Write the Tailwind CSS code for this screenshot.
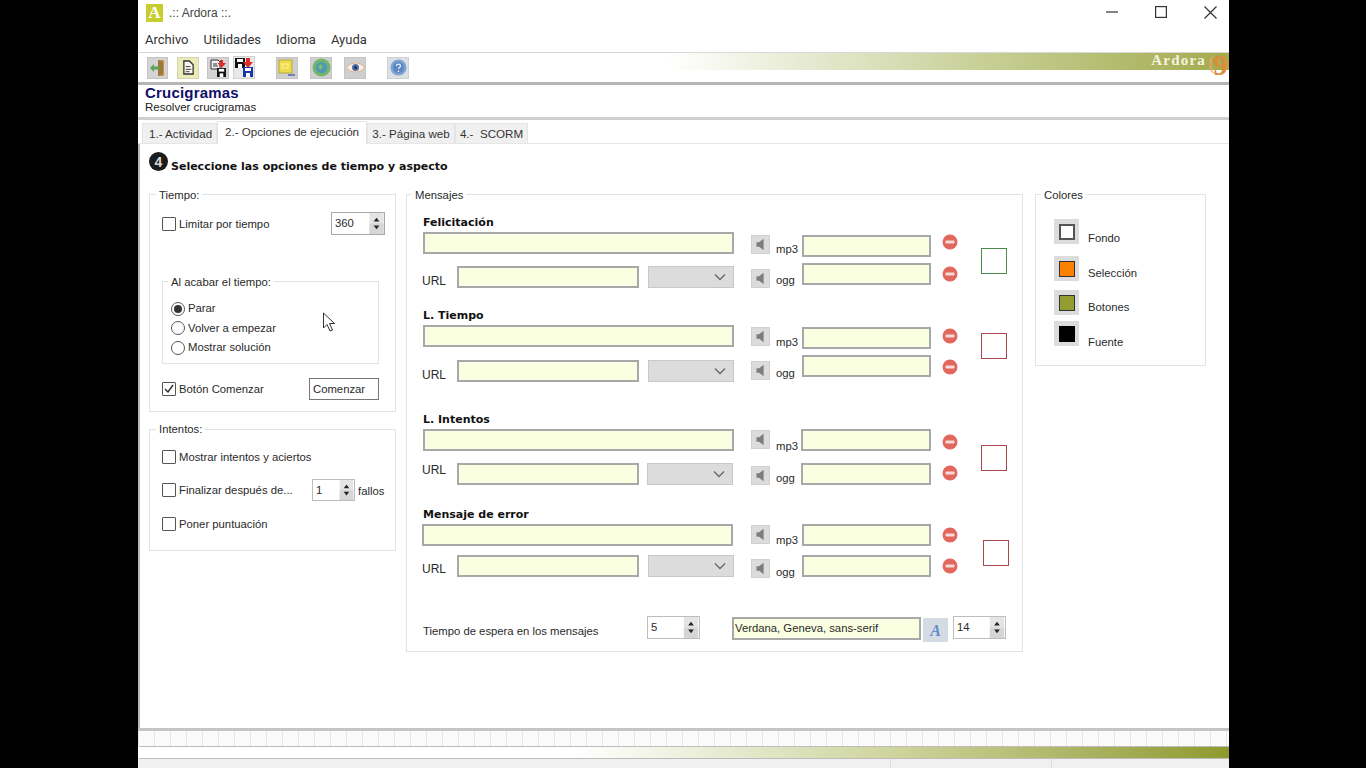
<!DOCTYPE html>
<html lang="es">
<head>
<meta charset="UTF-8">
<title>.:: Ardora ::.</title>
<script src="https://cdn.jsdelivr.net/npm/@tailwindcss/browser@4"></script>
</head>
<body class="bg-black h-[768px] overflow-hidden font-['Liberation_Sans',sans-serif] text-[#2a2a2a]">
<svg class="hidden">
  <symbol id="spk" viewBox="0 0 19 19"><path d="M5 7h3l5-4v13l-5-4H5z" fill="#7d7d7d"/></symbol>
  <symbol id="minus" viewBox="0 0 16 16"><circle cx="8" cy="8" r="7.5" fill="#e2685f"/><rect x="3.5" y="6.5" width="9" height="3" rx="1" fill="#f6dcd8"/></symbol>
  <symbol id="chev" viewBox="0 0 12 8"><path d="M1 1.5l5 5 5-5" fill="none" stroke="#666" stroke-width="1.3"/></symbol>
  <symbol id="spin" viewBox="0 0 15 22"><rect width="15" height="22" fill="#e4e4e4"/><rect y="11" width="15" height="11" fill="#d6d6d6"/><path d="M7.5 5l3 4h-6zM7.5 17l-3-4h6z" fill="#222"/></symbol>
  <symbol id="disk" viewBox="0 0 10 10"><path d="M0 0h10v10H0z" fill="currentColor"/><rect x="2" y="1" width="6" height="3" fill="#fff"/><rect x="3" y="6" width="4" height="4" fill="#fff"/></symbol>
</svg>

<div class="ml-[138px] w-[1091px] h-[768px] bg-white flex flex-col relative overflow-hidden">
  <!-- title bar -->
  <div class="h-[28px] flex items-center shrink-0">
    <div class="ml-[8px] mt-[-3px] w-[17px] h-[18px] bg-[#c6cd2c] flex items-center justify-center text-white font-['Liberation_Serif',serif] font-bold text-[17px] leading-none">A</div>
    <span class="ml-[6px] mt-[-3px] text-[12px] text-[#444]">.:: Ardora ::.</span>
    <div class="ml-auto flex items-center mt-[-4px]">
      <svg class="w-[12px] h-[12px]" viewBox="0 0 12 12"><path d="M0 6h12" stroke="#333" stroke-width="1.2"/></svg>
      <svg class="ml-[37px] w-[12px] h-[12px]" viewBox="0 0 12 12"><rect x=".6" y=".6" width="10.8" height="10.8" fill="none" stroke="#333" stroke-width="1.2"/></svg>
      <svg class="ml-[37px] mr-[12px] w-[13px] h-[13px]" viewBox="0 0 13 13"><path d="M.5.5l12 12M12.5.5l-12 12" stroke="#333" stroke-width="1.2"/></svg>
    </div>
  </div>
  <!-- menu -->
  <div class="h-[24px] flex items-center pl-[7px] gap-[15px] font-['Roboto',sans-serif] text-[13px] text-[#333] shrink-0">
    <span>Archivo</span><span>Utilidades</span><span>Idioma</span><span>Ayuda</span>
  </div>
  <!-- toolbar -->
  <div class="h-[30px] border-t border-[#d8d8d8] relative shrink-0 flex items-center pl-[9px]">
    <div class="absolute left-[530px] right-0 top-0 h-[17px] bg-gradient-to-r from-white via-[#c4cc8f] via-60% to-[#a3ab4c]"></div>
    <span class="absolute right-[23px] top-[-4px] font-['Liberation_Serif',serif] font-bold text-[15px] tracking-[1.2px] text-[#f4f3df]">Ardora</span>
    <span class="absolute right-[14px] top-[-1px] font-['Liberation_Serif',serif] text-[20px] leading-[20px] text-[#e6a468]">(</span>
    <span class="absolute right-[1px] top-[-3px] font-['Liberation_Serif',serif] font-bold text-[30px] leading-[30px] text-[#e08a3c]">9</span>
    <div class="relative flex items-center">
      <div class="w-[21px] h-[22px] bg-[#d4d4d4] border border-[#c4c4c4] flex items-center justify-center">
        <svg class="w-[17px] h-[18px]" viewBox="0 0 17 18"><path d="M9 1h6v16H9z" fill="#c98f45"/><path d="M9 1l5 2v12l-5 2z" fill="#9a7a3c"/><path d="M1 9l4-4v2.500h5v3H5V13z" fill="#5ea35c"/></svg>
      </div>
      <div class="ml-[9px] w-[22px] h-[22px] bg-[#e9ecb4] border border-[#d3d3b5] flex items-center justify-center">
        <svg class="w-[13px] h-[15px]" viewBox="0 0 14 16"><path d="M2 1h6l4 4v10H2z" fill="#f7f7f0" stroke="#333" stroke-width="1.400"/><path d="M4 7h5M4 10h6M4 12.500h4" stroke="#333"/></svg>
      </div>
      <div class="ml-[8px] w-[22px] h-[22px] bg-[#d4d4d4] border border-[#c4c4c4] relative">
        <svg class="absolute left-[2px] top-[1px] w-[17px] h-[19px]" viewBox="0 0 17 19"><path d="M1 1h7l2 2v7H1z" fill="#f2f2f2" stroke="#333"/><path d="M3 5h4M3 7h5" stroke="#333"/><path d="M10 1h3v3h3l-4.500 5L7.500 4H10z" fill="#e02a24"/></svg>
        <svg class="absolute right-[2px] bottom-[1px] w-[9px] h-[9px] text-[#111]"><use href="#disk"/></svg>
      </div>
      <div class="ml-[4px] w-[22px] h-[23px] bg-[#e8e8e8] border border-[#d0d0d0] relative">
        <svg class="absolute left-[1px] top-[1px] w-[10px] h-[10px] text-[#111]"><use href="#disk"/></svg>
        <svg class="absolute right-[1px] top-[1px] w-[10px] h-[11px]" viewBox="0 0 10 11"><path d="M3 0h4v4h3l-5 6-5-6h3z" fill="#e02a24"/></svg>
        <svg class="absolute right-[1px] bottom-[1px] w-[10px] h-[10px] text-[#1a35a8]"><use href="#disk"/></svg>
      </div>
      <div class="ml-[21px] w-[22px] h-[22px] bg-[#cfcfcf] border border-[#c4c4c4] relative">
        <svg class="absolute inset-0 m-auto w-[18px] h-[18px]" viewBox="0 0 18 18"><rect x="1" y="1" width="13" height="13" fill="#eedc4a" stroke="#b7a93a"/><rect x="4" y="5" width="6" height="4" fill="none" stroke="#fff5a5"/><path d="M10 16h7" stroke="#6d7fb5" stroke-width="2"/></svg>
      </div>
      <div class="ml-[12px] w-[22px] h-[22px] bg-[#cfcfcf] border border-[#c4c4c4] flex items-center justify-center">
        <svg class="w-[19px] h-[19px]" viewBox="0 0 19 19"><circle cx="9.500" cy="9.500" r="9" fill="#6fb56a"/><circle cx="9.500" cy="9.500" r="5.500" fill="#4f97b8"/><path d="M6 8l3-2 2 3-3 3z" fill="#7fc06a"/></svg>
      </div>
      <div class="ml-[12px] w-[22px] h-[22px] bg-[#cfcfcf] border border-[#c4c4c4] flex items-center justify-center">
        <svg class="w-[19px] h-[13px]" viewBox="0 0 19 13"><path d="M.5 6.500C5 .5 14 .5 18.500 6.500 14 12.500 5 12.500.5 6.500z" fill="#fbeee0" stroke="#e2b48a"/><circle cx="9.500" cy="6.500" r="3.500" fill="#4d6fb0"/><circle cx="9.500" cy="6.500" r="1.500" fill="#1e2d55"/></svg>
      </div>
      <div class="ml-[21px] w-[22px] h-[22px] bg-[#dcdfe4] border border-[#cdd0d5] flex items-center justify-center">
        <svg class="w-[17px] h-[17px]" viewBox="0 0 17 17"><circle cx="8.500" cy="8.500" r="8" fill="#7ea3d2"/><circle cx="8.500" cy="8.500" r="5.500" fill="#5b87c2"/><path d="M6.500 7c0-2.500 4-2.500 4 0 0 1.500-2 1.500-2 3M8.500 11.500v1.500" fill="none" stroke="#e6eefa" stroke-width="1.300"/></svg>
      </div>
    </div>
  </div>
  <!-- activity header -->
  <div class="shrink-0 border-t-[3px] border-b-[3px] border-t-[#b5b5b5] border-b-[#cfcfcf] pl-[7px] box-content h-[32px]">
    <div class="font-bold text-[15px] leading-[15px] text-[#10106a] tracking-[0.2px]">Crucigramas</div>
    <div class="text-[11.5px] leading-[14px] text-[#222]">Resolver crucigramas</div>
  </div>
  <!-- tabs -->
  <div class="h-[24px] shrink-0 border-b border-[#e6e6e6] flex items-end pl-[4px] text-[11.6px] text-[#333] relative">
    <div class="w-[75px] h-[20px] bg-[#f0f0f0] border border-b-0 border-[#e4e4e4] flex items-center pl-[6px]">1.- Actividad</div>
    <div class="w-[150px] h-[23px] bg-white border-t border-x border-[#e4e4e4] mb-[-1px] flex items-center justify-center pb-[2px]">2.- Opciones de ejecución</div>
    <div class="w-[88px] h-[20px] bg-[#f0f0f0] border border-b-0 border-[#e4e4e4] flex items-center justify-center">3.- Página web</div>
    <div class="w-[73px] h-[20px] bg-[#f0f0f0] border border-b-0 border-[#e4e4e4] flex items-center justify-center">4.-&nbsp; SCORM</div>
  </div>

  <!-- panel -->
  <div class="flex-1 border-l-2 border-[#b9b9b9] pl-[9px] pt-[8px] relative">
    <div class="flex items-center h-[19px]">
      <div class="w-[19px] h-[19px] rounded-full bg-[#1c1c1c] text-[#d8d8d8] text-[14px] font-bold flex items-center justify-center leading-none">4</div>
      <span class="ml-[3px] mt-[12px] font-['DejaVu_Sans',sans-serif] font-bold text-[11px] text-[#111]">Seleccione las opciones de tiempo y aspecto</span>
    </div>
    <div class="flex items-start mt-[23px] text-[11.3px] leading-[15px]">
      <!-- left column -->
      <div class="w-[247px]">
        <div class="h-[218px] border border-[#e3e3e3] relative">
          <span class="absolute left-[6px] top-[-7px] bg-white px-[3px]">Tiempo:</span>
          <div class="mt-[17px] h-[23px] flex items-center pl-[12px]">
            <span class="w-[14px] h-[14px] border border-[#555] bg-white rounded-[1px]"></span>
            <span class="ml-[3px] mt-[2px]">Limitar por tiempo</span>
            <div class="ml-auto mr-[10px] w-[54px] h-[23px] border border-[#a8a8a8] bg-white flex items-center pl-[3px]">
              <span class="flex-1">360</span><svg class="w-[15px] h-[21px]"><use href="#spin"/></svg>
            </div>
          </div>
          <div class="ml-[12px] mt-[46px] w-[217px] h-[83px] border border-[#e3e3e3] relative pt-[17px]">
            <span class="absolute left-[5px] top-[-7px] bg-white px-[3px]">Al acabar el tiempo:</span>
            <div class="h-[19.5px] flex items-center pl-[8px]">
              <span class="w-[14px] h-[14px] rounded-full border border-[#555] flex items-center justify-center"><span class="w-[8px] h-[8px] rounded-full bg-[#333]"></span></span>
              <span class="ml-[3px]">Parar</span>
            </div>
            <div class="h-[19.5px] flex items-center pl-[8px]">
              <span class="w-[14px] h-[14px] rounded-full border border-[#555]"></span>
              <span class="ml-[3px]">Volver a empezar</span>
            </div>
            <div class="h-[19.5px] flex items-center pl-[8px]">
              <span class="w-[14px] h-[14px] rounded-full border border-[#555]"></span>
              <span class="ml-[3px]">Mostrar solución</span>
            </div>
          </div>
          <div class="mt-[14px] h-[22px] flex items-center pl-[12px]">
            <span class="w-[14px] h-[14px] border border-[#555] flex items-center justify-center rounded-[1px]">
              <svg class="w-[12px] h-[12px]" viewBox="0 0 12 12"><path d="M2 6l3 3 5-7" fill="none" stroke="#222" stroke-width="1.300"/></svg>
            </span>
            <span class="ml-[3px]">Botón Comenzar</span>
            <div class="ml-auto mr-[16px] w-[70px] h-[22px] border border-[#777] flex items-center pl-[3px]">Comenzar</div>
          </div>
        </div>
        <div class="mt-[17px] h-[122px] border border-[#e3e3e3] relative pl-[12px]">
          <span class="absolute left-[6px] top-[-8px] bg-white px-[3px]">Intentos:</span>
          <div class="mt-[16px] h-[22px] flex items-center">
            <span class="w-[14px] h-[14px] border border-[#555] rounded-[1px]"></span>
            <span class="ml-[3px]">Mostrar intentos y aciertos</span>
          </div>
          <div class="mt-[11px] h-[22px] flex items-center">
            <span class="w-[14px] h-[14px] border border-[#555] rounded-[1px]"></span>
            <span class="ml-[3px] w-[133px]">Finalizar después de...</span>
            <div class="w-[43px] h-[22px] border border-[#bdbdbd] flex items-center pl-[3px]">
              <span class="flex-1">1</span><svg class="w-[15px] h-[20px]"><use href="#spin"/></svg>
            </div>
            <span class="ml-[3px] mt-[3px]">fallos</span>
          </div>
          <div class="mt-[12px] h-[22px] flex items-center">
            <span class="w-[14px] h-[14px] border border-[#555] rounded-[1px]"></span>
            <span class="ml-[3px]">Poner puntuación</span>
          </div>
        </div>
      </div>

      <!-- mensajes -->
      <div class="ml-[10px] w-[617px] h-[458px] border border-[#e3e3e3] relative pl-[15px] pt-[20px]">
        <span class="absolute left-[5px] top-[-7px] bg-white px-[3px]">Mensajes</span>

        <!-- Felicitación -->
        <div class="flex items-start">
          <div class="w-[329px]">
            <div class="h-[17px] ml-px font-['DejaVu_Sans',sans-serif] font-bold text-[11px] text-[#111]">Felicitación</div>
            <div class="ml-px w-[311px] h-[22px] bg-[#fbffe2] border-2 border-[#a8a8a8]"></div>
            <div class="mt-[12px] h-[22px] flex items-start">
              <span class="w-[35px] mt-[8px] text-[12px]">URL</span>
              <div class="w-[182px] h-[22px] bg-[#fbffe2] border-2 border-[#a8a8a8]"></div>
              <div class="ml-[9px] w-[86px] h-[22px] bg-[#dcdcdc] border border-[#c8c8c8] flex items-center justify-end pr-[7px]"><svg class="w-[12px] h-[8px]"><use href="#chev"/></svg></div>
            </div>
          </div>
          <div class="w-[208px] pt-[20px]">
            <div class="h-[22px] flex items-start">
              <div class="w-[19px] h-[19px] bg-[#dcdcdc] border border-[#d0d0d0]"><svg class="w-[17px] h-[17px]"><use href="#spk"/></svg></div>
              <span class="ml-[6px] w-[26px] mt-[7px]">mp3</span>
              <div class="w-[129px] h-[22px] bg-[#fbffe2] border-2 border-[#a8a8a8]"></div>
              <svg class="ml-[11px] mt-[-1px] w-[16px] h-[16px]"><use href="#minus"/></svg>
            </div>
            <div class="mt-[6px] h-[22px] flex items-start">
              <div class="mt-[6px] w-[19px] h-[19px] bg-[#dcdcdc] border border-[#d0d0d0]"><svg class="w-[17px] h-[17px]"><use href="#spk"/></svg></div>
              <span class="ml-[6px] w-[26px] mt-[10px]">ogg</span>
              <div class="w-[129px] h-[22px] bg-[#fbffe2] border-2 border-[#a8a8a8]"></div>
              <svg class="ml-[11px] mt-[3px] w-[16px] h-[16px]"><use href="#minus"/></svg>
            </div>
          </div>
          <div class="ml-[22px] mt-[33px] w-[26px] h-[26px] border-[1.5px] border-[#4b8a4b]"></div>
        </div>

        <!-- L. Tiempo -->
        <div class="flex items-start mt-[20px]">
          <div class="w-[329px]">
            <div class="h-[17px] ml-px font-['DejaVu_Sans',sans-serif] font-bold text-[11px] text-[#111]">L. Tiempo</div>
            <div class="ml-px w-[311px] h-[22px] bg-[#fbffe2] border-2 border-[#a8a8a8]"></div>
            <div class="mt-[13px] h-[22px] flex items-start">
              <span class="w-[35px] mt-[8px] text-[12px]">URL</span>
              <div class="w-[182px] h-[22px] bg-[#fbffe2] border-2 border-[#a8a8a8]"></div>
              <div class="ml-[9px] w-[86px] h-[22px] bg-[#dcdcdc] border border-[#c8c8c8] flex items-center justify-end pr-[7px]"><svg class="w-[12px] h-[8px]"><use href="#chev"/></svg></div>
            </div>
          </div>
          <div class="w-[208px] pt-[19px]">
            <div class="h-[22px] flex items-start">
              <div class="w-[19px] h-[19px] bg-[#dcdcdc] border border-[#d0d0d0]"><svg class="w-[17px] h-[17px]"><use href="#spk"/></svg></div>
              <span class="ml-[6px] w-[26px] mt-[8px]">mp3</span>
              <div class="w-[129px] h-[22px] bg-[#fbffe2] border-2 border-[#a8a8a8]"></div>
              <svg class="ml-[11px] mt-[1px] w-[16px] h-[16px]"><use href="#minus"/></svg>
            </div>
            <div class="mt-[6px] h-[22px] flex items-start">
              <div class="mt-[6px] w-[19px] h-[19px] bg-[#dcdcdc] border border-[#d0d0d0]"><svg class="w-[17px] h-[17px]"><use href="#spk"/></svg></div>
              <span class="ml-[6px] w-[26px] mt-[11px]">ogg</span>
              <div class="w-[129px] h-[22px] bg-[#fbffe2] border-2 border-[#a8a8a8]"></div>
              <svg class="ml-[11px] mt-[4px] w-[16px] h-[16px]"><use href="#minus"/></svg>
            </div>
          </div>
          <div class="ml-[22px] mt-[25px] w-[26px] h-[26px] border-[1.5px] border-[#a9484c]"></div>
        </div>

        <!-- L. Intentos -->
        <div class="flex items-start mt-[30px]">
          <div class="w-[329px]">
            <div class="h-[17px] ml-px font-['DejaVu_Sans',sans-serif] font-bold text-[11px] text-[#111]">L. Intentos</div>
            <div class="ml-px w-[311px] h-[22px] bg-[#fbffe2] border-2 border-[#a8a8a8]"></div>
            <div class="mt-[12px] h-[22px] flex items-start">
              <span class="w-[35px] text-[12px]">URL</span>
              <div class="w-[182px] h-[22px] bg-[#fbffe2] border-2 border-[#a8a8a8]"></div>
              <div class="ml-[8px] w-[86px] h-[22px] bg-[#dcdcdc] border border-[#c8c8c8] flex items-center justify-end pr-[7px]"><svg class="w-[12px] h-[8px]"><use href="#chev"/></svg></div>
            </div>
          </div>
          <div class="w-[208px] pt-[17px]">
            <div class="h-[22px] flex items-start">
              <div class="mt-px w-[19px] h-[19px] bg-[#dcdcdc] border border-[#d0d0d0]"><svg class="w-[17px] h-[17px]"><use href="#spk"/></svg></div>
              <span class="ml-[6px] w-[25px] mt-[10px]">mp3</span>
              <div class="w-[130px] h-[22px] bg-[#fbffe2] border-2 border-[#a8a8a8]"></div>
              <svg class="ml-[11px] mt-[5px] w-[16px] h-[16px]"><use href="#minus"/></svg>
            </div>
            <div class="mt-[12px] h-[22px] flex items-start">
              <div class="mt-[3px] w-[19px] h-[19px] bg-[#dcdcdc] border border-[#d0d0d0]"><svg class="w-[17px] h-[17px]"><use href="#spk"/></svg></div>
              <span class="ml-[6px] w-[25px] mt-[8px]">ogg</span>
              <div class="w-[130px] h-[22px] bg-[#fbffe2] border-2 border-[#a8a8a8]"></div>
              <svg class="ml-[11px] mt-[2px] w-[16px] h-[16px]"><use href="#minus"/></svg>
            </div>
          </div>
          <div class="ml-[22px] mt-[33px] w-[26px] h-[26px] border-[1.5px] border-[#a9484c]"></div>
        </div>

        <!-- Mensaje de error -->
        <div class="flex items-start mt-[22px]">
          <div class="w-[329px]">
            <div class="h-[17px] ml-px font-['DejaVu_Sans',sans-serif] font-bold text-[11px] text-[#111]">Mensaje de error</div>
            <div class="w-[311px] h-[22px] bg-[#fbffe2] border-2 border-[#a8a8a8]"></div>
            <div class="mt-[9px] h-[22px] flex items-start">
              <span class="w-[35px] mt-[7px] text-[12px]">URL</span>
              <div class="w-[182px] h-[22px] bg-[#fbffe2] border-2 border-[#a8a8a8]"></div>
              <div class="ml-[9px] w-[86px] h-[22px] bg-[#dcdcdc] border border-[#c8c8c8] flex items-center justify-end pr-[7px]"><svg class="w-[12px] h-[8px]"><use href="#chev"/></svg></div>
            </div>
          </div>
          <div class="w-[208px] pt-[17px]">
            <div class="h-[22px] flex items-start">
              <div class="mt-px w-[19px] h-[19px] bg-[#dcdcdc] border border-[#d0d0d0]"><svg class="w-[17px] h-[17px]"><use href="#spk"/></svg></div>
              <span class="ml-[6px] w-[26px] mt-[9px]">mp3</span>
              <div class="w-[129px] h-[22px] bg-[#fbffe2] border-2 border-[#a8a8a8]"></div>
              <svg class="ml-[11px] mt-[3px] w-[16px] h-[16px]"><use href="#minus"/></svg>
            </div>
            <div class="mt-[9px] h-[22px] flex items-start">
              <div class="mt-[4px] w-[19px] h-[19px] bg-[#dcdcdc] border border-[#d0d0d0]"><svg class="w-[17px] h-[17px]"><use href="#spk"/></svg></div>
              <span class="ml-[6px] w-[26px] mt-[10px]">ogg</span>
              <div class="w-[129px] h-[22px] bg-[#fbffe2] border-2 border-[#a8a8a8]"></div>
              <svg class="ml-[11px] mt-[3px] w-[16px] h-[16px]"><use href="#minus"/></svg>
            </div>
          </div>
          <div class="ml-[24px] mt-[33px] w-[26px] h-[26px] border-[1.5px] border-[#a9484c]"></div>
        </div>

        <!-- footer row -->
        <div class="flex items-start mt-[39px] ml-px">
          <span class="w-[224px] mt-[8px]">Tiempo de espera en los mensajes</span>
          <div class="w-[53px] h-[23px] border border-[#bdbdbd] flex items-center pl-[3px]"><span class="flex-1">5</span><svg class="w-[16px] h-[21px]"><use href="#spin"/></svg></div>
          <div class="ml-[32px] mt-px w-[189px] h-[23px] bg-[#fbffe2] border-2 border-[#a8a8a8] flex items-center pl-[1px]">Verdana, Geneva, sans-serif</div>
          <div class="ml-[2px] mt-[2px] w-[25px] h-[24px] bg-[#d5dbe2] flex items-center justify-center font-['Liberation_Serif',serif] italic font-bold text-[16px] text-[#5f8ccc]">A</div>
          <div class="ml-[5px] w-[53px] h-[23px] border border-[#bdbdbd] flex items-center pl-[3px]"><span class="flex-1">14</span><svg class="w-[16px] h-[21px]"><use href="#spin"/></svg></div>
        </div>
      </div>

      <!-- colores -->
      <div class="ml-[12px] w-[171px] h-[172px] border border-[#e3e3e3] relative pl-[18px] pt-[24px]">
        <span class="absolute left-[5px] top-[-7px] bg-white px-[3px]">Colores</span>
        <div class="h-[25px] flex items-start">
          <div class="w-[25px] h-[25px] bg-[#dcdcdc] flex items-center justify-center"><span class="w-[16px] h-[16px] bg-white border-2 border-[#555]"></span></div>
          <span class="ml-[9px] mt-[12px]">Fondo</span>
        </div>
        <div class="mt-[12px] h-[25px] flex items-start">
          <div class="w-[25px] h-[25px] bg-[#dcdcdc] flex items-center justify-center"><span class="w-[16px] h-[16px] bg-[#fb8000] border border-[#333]"></span></div>
          <span class="ml-[9px] mt-[10px]">Selección</span>
        </div>
        <div class="mt-[9px] h-[25px] flex items-start">
          <div class="w-[25px] h-[25px] bg-[#dcdcdc] flex items-center justify-center"><span class="w-[16px] h-[16px] bg-[#929c2f] border border-[#333]"></span></div>
          <span class="ml-[9px] mt-[10px]">Botones</span>
        </div>
        <div class="mt-[6px] h-[25px] flex items-start">
          <div class="w-[25px] h-[25px] bg-[#dcdcdc] flex items-center justify-center"><span class="w-[16px] h-[16px] bg-black"></span></div>
          <span class="ml-[9px] mt-[14px]">Fuente</span>
        </div>
      </div>
    </div>
    <!-- mouse pointer in the capture -->
    <svg class="absolute left-[182px] top-[168px] w-[15px] h-[21px]" viewBox="0 0 15 21"><path d="M1.500 1v15l3.500-3.500 3 6.500 2.500-1-3-6.500h5z" fill="#fff" stroke="#333" stroke-width="1"/></svg>
  </div>

  <!-- bottom bars -->
  <div class="h-[3px] shrink-0 bg-[#c4c4c4]"></div>
  <div class="h-[15px] shrink-0 bg-[repeating-linear-gradient(90deg,#e6e6e6_0,#e6e6e6_1px,#fbfbfb_1px,#fbfbfb_16px)]"></div>
  <div class="h-[13px] shrink-0 border-y border-[#bdbdbd] bg-gradient-to-r from-white from-40% via-[#cdd39a] via-70% to-[#8f9a2c] ml-[1px]"></div>
  <div class="h-[9px] shrink-0 bg-[#f0f0f0] flex">
    <div class="ml-[752px] w-[162px] border-x border-[#dcdcdc]"></div>
  </div>
</div>
</body>
</html>
